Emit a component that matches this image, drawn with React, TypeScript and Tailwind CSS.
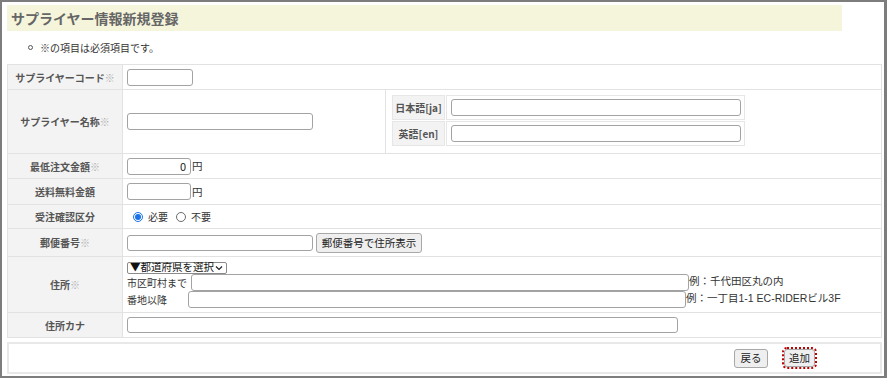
import React from "react";

const jp = "font-['Noto_Sans_CJK_JP',sans-serif]";
const mixed = "font-['Liberation_Sans','Noto_Sans_CJK_JP',sans-serif]";

function Req() {
  return <span className="font-normal text-[#b0b0b0]">※</span>;
}

function Label({ children, req }: { children: React.ReactNode; req?: boolean }) {
  return (
    <th className="w-[115px] border border-[#e2e2e2] bg-[#f3f3f3] p-0 text-center align-middle text-[10px] font-bold text-[#555]">
      {children}
      {req && <Req />}
    </th>
  );
}

function TextBox({ className = "", value }: { className?: string; value?: string }) {
  return (
    <input
      type="text"
      readOnly
      defaultValue={value}
      className={`block rounded-[3px] border border-[#a3a3a3] bg-white px-1 text-[11px] text-[#222] outline-none ${className}`}
    />
  );
}

function Radio({ checked }: { checked?: boolean }) {
  return checked ? (
    <span className="flex h-[10px] w-[10px] items-center justify-center rounded-full border border-[#1a73e8] bg-white">
      <span className="h-[6px] w-[6px] rounded-full bg-[#1a73e8]" />
    </span>
  ) : (
    <span className="h-[10px] w-[10px] rounded-full border border-[#6b6b6b] bg-white" />
  );
}

function Btn({ children, className = "" }: { children: React.ReactNode; className?: string }) {
  return (
    <button
      type="button"
      className={`flex items-center justify-center rounded-[3px] border border-[#a8a8a8] bg-[#efefef] text-[10.5px] text-[#222] ${className}`}
    >
      {children}
    </button>
  );
}

export default function App() {
  return (
    <div
      className={`box-border h-[378px] w-full overflow-hidden border-t-2 border-r-[3px] border-b-2 border-l-2 border-[#7d7d7d] bg-white pt-[3px] pl-[5px] ${jp}`}
    >
      {/* Title */}
      <div className="flex h-[26px] w-[835px] items-center bg-[#f5f5dc] pl-[4px] text-[14px] font-bold text-[#666]">
        サプライヤー情報新規登録
      </div>

      {/* Note */}
      <div className="flex h-[33px] items-center pl-[21px] text-[10px] text-[#333]">
        <span className="mr-[7px] h-[5px] w-[5px] rounded-full border border-[#555]" />
        ※の項目は必須項目です。
      </div>

      {/* Form table */}
      <table className="w-[875px] table-fixed border-collapse border border-[#e2e2e2]">
        <colgroup>
          <col className="w-[115px]" />
          <col className="w-[263px]" />
          <col />
        </colgroup>
        <tbody>
          <tr className="h-[25px]">
            <Label req>サプライヤーコード</Label>
            <td colSpan={2} className="border border-[#e2e2e2] pl-[4px]">
              <TextBox className="h-[17px] w-[66px]" />
            </td>
          </tr>

          <tr className="h-[64px]">
            <Label req>サプライヤー名称</Label>
            <td className="border border-[#e2e2e2] pl-[4px]">
              <TextBox className="h-[17px] w-[186px]" />
            </td>
            <td className="border border-[#e2e2e2] pt-[4px] pb-[5px] pl-[5px] align-top">
              <table className="border-separate border-spacing-[1px]">
                <tbody>
                  <tr className="h-[25px]">
                    <td className="w-[53px] border border-[#e6e6e6] bg-[#f3f3f3] text-center text-[10px] font-bold text-[#555]">
                      日本語[ja]
                    </td>
                    <td className="w-[299px] border border-[#e6e6e6] pl-[4px]">
                      <TextBox className="h-[17px] w-[290px]" />
                    </td>
                  </tr>
                  <tr className="h-[25px]">
                    <td className="border border-[#e6e6e6] bg-[#f3f3f3] text-center text-[10px] font-bold text-[#555]">
                      英語[en]
                    </td>
                    <td className="border border-[#e6e6e6] pl-[4px]">
                      <TextBox className="h-[17px] w-[290px]" />
                    </td>
                  </tr>
                </tbody>
              </table>
            </td>
          </tr>

          <tr className="h-[25px]">
            <Label req>最低注文金額</Label>
            <td colSpan={2} className="border border-[#e2e2e2] pl-[4px]">
              <div className="flex items-center text-[10.5px] text-[#333]">
                <TextBox value="0" className="h-[17px] w-[64px] text-right" />
                <span className="ml-[1px]">円</span>
              </div>
            </td>
          </tr>

          <tr className="h-[26px]">
            <Label>送料無料金額</Label>
            <td colSpan={2} className="border border-[#e2e2e2] pl-[4px]">
              <div className="flex items-center text-[10.5px] text-[#333]">
                <TextBox className="h-[17px] w-[64px]" />
                <span className="ml-[1px]">円</span>
              </div>
            </td>
          </tr>

          <tr className="h-[24px]">
            <Label>受注確認区分</Label>
            <td colSpan={2} className="border border-[#e2e2e2] pl-[10px]">
              <div className="flex items-center text-[10px] text-[#333]">
                <Radio checked />
                <span className="ml-[5px] mr-[8px]">必要</span>
                <Radio />
                <span className="ml-[5px]">不要</span>
              </div>
            </td>
          </tr>

          <tr className="h-[28px]">
            <Label req>郵便番号</Label>
            <td colSpan={2} className="border border-[#e2e2e2] pl-[4px]">
              <div className="flex items-center">
                <TextBox className="h-[16px] w-[186px]" />
                <Btn className="ml-[3px] h-[20px] w-[106px]">郵便番号で住所表示</Btn>
              </div>
            </td>
          </tr>

          <tr className="h-[56px]">
            <Label req>住所</Label>
            <td colSpan={2} className="border border-[#e2e2e2] pl-[4px]">
              <div className="flex flex-col text-[10px] text-[#333]">
                <div className="flex h-[12px] w-[100px] items-center justify-between rounded-[2px] border border-[#8a8a8a] px-[2px] text-[10.5px] leading-none text-[#111]">
                  <span>▼都道府県を選択</span>
                  <svg width="8" height="6" viewBox="0 0 8 6" className="mr-[1px]">
                    <path d="M1 1.5 L4 4.5 L7 1.5" fill="none" stroke="#222" strokeWidth="1.2" />
                  </svg>
                </div>
                <div className="flex h-[17px] items-center">
                  <span className="w-[64px]">市区町村まで</span>
                  <TextBox className="h-[17px] w-[498px]" />
                  <span className={`${mixed} text-[10.5px]`}>例：千代田区丸の内</span>
                </div>
                <div className="flex h-[17px] items-center">
                  <span className="w-[61px]">番地以降</span>
                  <TextBox className="h-[17px] w-[498px]" />
                  <span className={`${mixed} text-[10.5px]`}>例：一丁目1-1 EC-RIDERビル3F</span>
                </div>
              </div>
            </td>
          </tr>

          <tr className="h-[25px]">
            <Label>住所カナ</Label>
            <td colSpan={2} className="border border-[#e2e2e2] pl-[4px]">
              <TextBox className="h-[16px] w-[551px]" />
            </td>
          </tr>
        </tbody>
      </table>

      {/* Footer */}
      <div className="mt-[4px] flex h-[32px] w-[875px] items-center justify-end border-2 border-[#e8e8e8] pr-[65px]">
        <Btn className="h-[19px] w-[34px]">戻る</Btn>
        <Btn className="ml-[16px] h-[18px] w-[31px] outline-2 outline-offset-0 outline-dotted outline-[#c00000]">
          追加
        </Btn>
      </div>
    </div>
  );
}
